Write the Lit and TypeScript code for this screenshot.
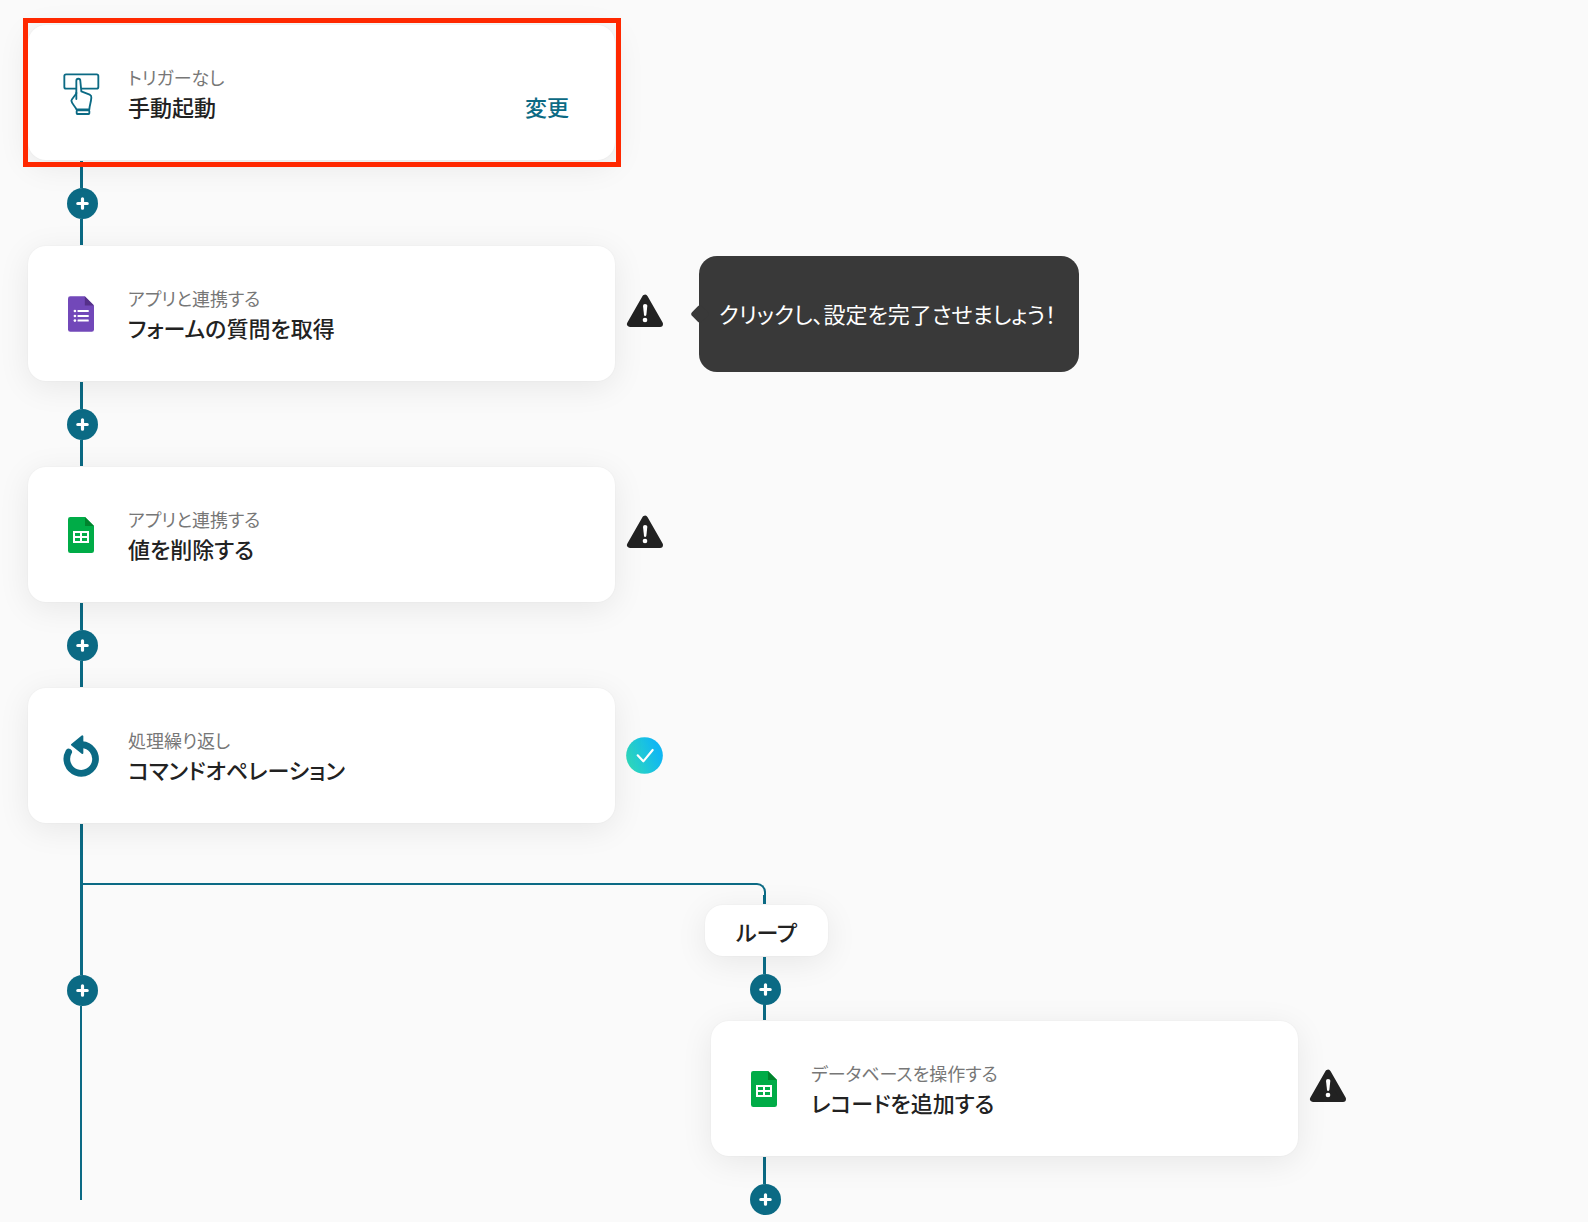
import { LitElement, css, html, nothing, svg } from "lit";
import { customElement, property } from "lit/decorators.js";

type IconName = "tap" | "form" | "sheet" | "loop";
type Status = "none" | "warning" | "done";

interface Step {
  icon: IconName;
  label: string;
  title: string;
  status: Status;
  action?: string;
  hint?: string;
  selected?: boolean;
}

const MAIN_STEPS: Step[] = [
  { icon: "tap", label: "トリガーなし", title: "手動起動", status: "none", action: "変更", selected: true },
  {
    icon: "form",
    label: "アプリと連携する",
    title: "フォームの質問を取得",
    status: "warning",
    hint: "クリックし、設定を完了させましょう！",
  },
  { icon: "sheet", label: "アプリと連携する", title: "値を削除する", status: "warning" },
  { icon: "loop", label: "処理繰り返し", title: "コマンドオペレーション", status: "done" },
];

const LOOP_STEP: Step = {
  icon: "sheet",
  label: "データベースを操作する",
  title: "レコードを追加する",
  status: "warning",
};

const ICONS = {
  tap: html`<svg width="38" height="44" viewBox="66 63 114 132" fill="none" stroke="#0b6a84" stroke-width="5.5" stroke-linejoin="round" stroke-linecap="round" aria-hidden="true">
    <rect x="73" y="73" width="102" height="43" rx="5" />
    <path fill="#fff" d="M109 178 C107 170 95 162 94 152 C94 148 104 139 109 130 V93 C109 84 121 84 121 93 L124 124 L149 134 Q155 137 154 143 C153 158 149 164 148 178 Z" />
    <path d="M109 128 V147" />
    <rect x="110" y="181" width="38" height="11" rx="2" fill="#fff" />
  </svg>`,
  form: html`<svg width="26" height="36" viewBox="174 170 79 108" aria-hidden="true">
    <path fill="#7248b9" d="M181 170 H225 L253 198 V271 Q253 278 246 278 H181 Q174 278 174 271 V177 Q174 170 181 170 Z" />
    <path fill="#553089" d="M225 170 L253 198 H225 Z" />
    <g fill="#fff">
      <circle cx="195" cy="215" r="4" /><rect x="203" y="212" width="34" height="6" rx="1" />
      <circle cx="195" cy="230" r="4" /><rect x="203" y="227" width="34" height="6" rx="1" />
      <circle cx="195" cy="244" r="4" /><rect x="203" y="241" width="34" height="6" rx="1" />
    </g>
  </svg>`,
  sheet: html`<svg width="26" height="36" viewBox="84 54 78 108" aria-hidden="true">
    <path fill="#00ac47" d="M91 54 H135 L162 81 V155 Q162 162 155 162 H91 Q84 162 84 155 V61 Q84 54 91 54 Z" />
    <path fill="#00832d" d="M135 54 L162 81 H135 Z" />
    <path fill="#fff" fill-rule="evenodd" d="M99 96 H147 V132 H99 Z M105 102 V111 H120 V102 Z M126 102 V111 H141 V102 Z M105 117 V126 H120 V117 Z M126 117 V126 H141 V117 Z" />
  </svg>`,
  loop: html`<svg width="38" height="44" viewBox="66 162 114 132" aria-hidden="true">
    <path fill="none" stroke="#0b6a84" stroke-width="20" stroke-linecap="round" d="M86 216 A43 43 0 1 0 126 194" />
    <path fill="#0b6a84" stroke="#0b6a84" stroke-width="6" stroke-linejoin="round" d="M127 169 V219 L96 194 Z" />
  </svg>`,
};

const WARNING_ICON = html`<svg class="status" width="37" height="40" viewBox="78 163 111 120" role="img" aria-label="設定が未完了">
  <path fill="#222" stroke="#222" stroke-width="18" stroke-linejoin="round" d="M135 174 L90 253 H180 Z" />
  <path fill="#fff" d="M129 198 Q129 193 135 193 Q142 193 142 198 L139 226 Q138 229 135 229 Q133 229 132 226 Z" />
  <circle fill="#fff" cx="135" cy="241" r="7" />
</svg>`;

const DONE_ICON = html`<svg class="status" width="37" height="37" viewBox="79 171 111 111" role="img" aria-label="設定済み">
  <defs>
    <linearGradient id="done-fill" x1="0" y1="0.7" x2="1" y2="0.3">
      <stop offset="0.05" stop-color="#2ed8bd" />
      <stop offset="0.85" stop-color="#10b7f2" />
    </linearGradient>
  </defs>
  <circle cx="134.5" cy="226.500" r="55" fill="url(#done-fill)" />
  <path fill="none" stroke="#fff" stroke-width="6.500" stroke-linecap="round" stroke-linejoin="round" d="M114 226 L131 244 L159 210" />
</svg>`;

@customElement("flow-step")
export class FlowStep extends LitElement {
  @property({ attribute: false }) step!: Step;

  static styles = css`
    :host {
      display: flex;
      align-items: center;
    }
    .card {
      box-sizing: border-box;
      position: relative;
      flex: none;
      display: flex;
      align-items: center;
      gap: 28px;
      width: var(--card-width);
      min-height: 135px;
      padding: 0 46px 0 34px;
      border-radius: 18px;
      background: #fff;
      box-shadow: 0 6px 32px rgba(0, 0, 0, 0.08), 0 0 2px rgba(0, 0, 0, 0.05);
    }
    .card.selected::after {
      content: "";
      position: absolute;
      inset: -7px -6px -7px -5px;
      border: 5px solid #ff2800;
      pointer-events: none;
      z-index: 1;
    }
    .icon {
      flex: none;
      display: flex;
      justify-content: center;
      width: 38px;
    }
    .text {
      flex: 1;
      display: grid;
      grid-template-columns: 1fr auto;
      padding-bottom: 1px;
    }
    .label {
      grid-column: 1 / -1;
      margin: 0;
      font-size: 18px;
      line-height: 28px;
      color: #777;
    }
    .title {
      margin: 0;
      font-size: 22px;
      font-weight: 500;
      line-height: 30px;
      color: #222;
    }
    .action {
      padding: 0;
      border: 0;
      background: none;
      font: inherit;
      font-size: 22px;
      font-weight: 500;
      line-height: 30px;
      color: #0b6a84;
      cursor: pointer;
    }
    .status {
      flex: none;
      margin-left: 11px;
    }
    .hint {
      position: relative;
      box-sizing: border-box;
      display: flex;
      align-items: center;
      min-height: 116px;
      margin-left: 36px;
      padding: 0 23px 2px 20px;
      border-radius: 18px;
      background: #393939;
      color: #fff;
      font-size: 22px;
      line-height: 32px;
      white-space: nowrap;
    }
    .hint::before {
      content: "";
      position: absolute;
      left: -6px;
      top: calc(50% - 7px);
      width: 14px;
      height: 14px;
      border-radius: 3px;
      background: #393939;
      transform: rotate(45deg);
    }
  `;

  render() {
    const { icon, label, title, status, action, hint, selected } = this.step;
    return html`
      <article class="card ${selected ? "selected" : ""}">
        <span class="icon">${ICONS[icon]}</span>
        <div class="text">
          <p class="label">${label}</p>
          <h2 class="title">${title}</h2>
          ${action ? html`<button class="action" type="button">${action}</button>` : nothing}
        </div>
      </article>
      ${status === "warning" ? WARNING_ICON : status === "done" ? DONE_ICON : nothing}
      ${hint ? html`<div class="hint" role="tooltip">${hint}</div>` : nothing}
    `;
  }
}

@customElement("add-step")
export class AddStep extends LitElement {
  static styles = css`
    :host {
      display: block;
      flex: none;
      height: 31px;
    }
    .add {
      display: block;
      width: 31px;
      height: 31px;
      padding: 0;
      border: 0;
      border-radius: 50%;
      background: #0b6a84;
      cursor: pointer;
    }
    .plus {
      display: block;
    }
  `;

  render() {
    return html`<button class="add" type="button" aria-label="ステップを追加">
      <svg class="plus" width="31" height="31" viewBox="0 0 31 31" aria-hidden="true">
        ${svg`<path d="M15.500 10.800 V20.200 M10.800 15.500 H20.200" stroke="#fff" stroke-width="3.200" stroke-linecap="round" />`}
      </svg>
    </button>`;
  }
}

@customElement("app-root")
export class AppRoot extends LitElement {
  static styles = css`
    :host {
      --card-width: max(420px, round(down, 37vw, 1px));
      --branch-offset: calc(var(--card-width) + 96px);
      display: block;
      box-sizing: border-box;
      min-height: 100vh;
      padding: 25px 24px 8px 28px;
      background: #fafafa;
      font-family: "Noto Sans CJK JP", "Liberation Sans", sans-serif;
      font-feature-settings: "palt";
    }
    .connector {
      display: flex;
      flex-direction: column;
      box-sizing: border-box;
      width: 31px;
      margin-left: 39px;
      padding: 1px 0;
    }
    .between {
      height: 86px;
    }
    .line {
      flex: 1;
      width: 3px;
      margin-left: 13px;
      background: #0b6a84;
    }
    .lead {
      flex: 0 0 27px;
    }
    .split {
      display: grid;
      grid-template-columns: var(--branch-offset) 1fr;
      grid-template-rows: auto 1fr;
    }
    .trunk {
      grid-area: 1 / 1 / 3 / 2;
      padding-bottom: 16px;
    }
    .trunk-lead {
      flex: 0 0 151px;
    }
    .thin {
      width: 2px;
    }
    .elbow {
      grid-area: 1 / 1 / 2 / 3;
      box-sizing: border-box;
      width: var(--branch-offset);
      height: 12px;
      margin: 60px 0 0 55px;
      border: solid #0b6a84;
      border-width: 2px 2px 0 0;
      border-top-right-radius: 9px;
    }
    .branch {
      grid-area: 2 / 2 / 3 / 3;
    }
    .stub {
      height: 10px;
      padding: 0 0 1px;
    }
    .pill {
      width: fit-content;
      margin: 0 0 0 -6px;
      padding: 11px 31px 10px;
      border-radius: 18px;
      background: #fff;
      box-shadow: 0 6px 32px rgba(0, 0, 0, 0.08), 0 0 2px rgba(0, 0, 0, 0.05);
      font-size: 22px;
      font-weight: 500;
      line-height: 30px;
      color: #222;
    }
    .short {
      height: 65px;
    }
    .short-lead {
      flex: 0 0 17px;
    }
  `;

  render() {
    return html`
      <main>
        ${MAIN_STEPS.map(
          (step, i) => html`
            <flow-step .step=${step}></flow-step>
            ${i < MAIN_STEPS.length - 1
              ? html`<div class="connector between">
                  <div class="line lead"></div>
                  <add-step></add-step>
                  <div class="line"></div>
                </div>`
              : nothing}
          `
        )}
        <div class="split">
          <div class="connector trunk">
            <div class="line trunk-lead"></div>
            <add-step></add-step>
            <div class="line thin"></div>
          </div>
          <div class="elbow"></div>
          <section class="branch">
            <div class="connector stub"><div class="line"></div></div>
            <h3 class="pill">ループ</h3>
            <div class="connector short">
              <div class="line short-lead"></div>
              <add-step></add-step>
              <div class="line"></div>
            </div>
            <flow-step .step=${LOOP_STEP}></flow-step>
            <div class="connector">
              <div class="line lead"></div>
              <add-step></add-step>
            </div>
          </section>
        </div>
      </main>
    `;
  }
}
